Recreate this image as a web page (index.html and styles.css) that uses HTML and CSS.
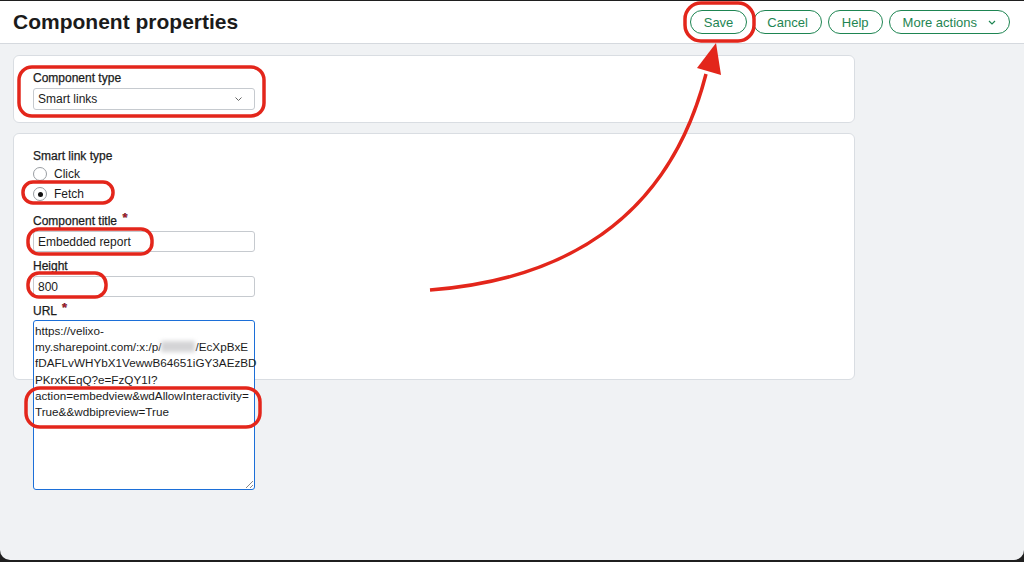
FILE: index.html
```html
<!DOCTYPE html>
<html lang="en">
<head>
  <meta charset="UTF-8" />
  <title>Component properties</title>
  <link rel="stylesheet" href="styles.css">
</head>
<body>

<div class="window">
  <header class="topbar">
    <h1>Component properties</h1>
    <div class="actions">
      <button class="btn">Save</button>
      <button class="btn">Cancel</button>
      <button class="btn">Help</button>
      <button class="btn more">More actions
        <svg width="8" height="5" viewBox="0 0 8 5"><path d="M1 1l3 3 3-3" fill="none" stroke="#1e8552" stroke-width="1.2"/></svg>
      </button>
    </div>
  </header>

  <main class="content">
    <section class="card card-type">
      <label class="field-label">Component type</label>
      <div class="select">
        <span>Smart links</span>
        <svg width="7" height="4" viewBox="0 0 7 4"><path d="M0.5 0.5l3 3 3-3" fill="none" stroke="#666" stroke-width="1"/></svg>
      </div>
    </section>

    <section class="card card-link">
      <label class="field-label">Smart link type</label>
      <div class="radio-row"><span class="radio"></span>Click</div>
      <div class="radio-row"><span class="radio checked"></span>Fetch</div>

      <label class="field-label spaced">Component title <span class="req">*</span></label>
      <div class="input">Embedded report</div>

      <label class="field-label spaced-sm">Height</label>
      <div class="input">800</div>

      <label class="field-label spaced-xs">URL <span class="req">*</span></label>
      <div class="textarea">
        <span class="line">https://velixo-</span>
        <span class="line">my.sharepoint.com/:x:/p/<span class="blur"></span>/EcXpBxE</span>
        <span class="line">fDAFLvWHYbX1VewwB64651iGY3AEzBD</span>
        <span class="line">PKrxKEqQ?e=FzQY1I?</span>
        <span class="line">action=embedview&amp;wdAllowInteractivity=</span>
        <span class="line">True&amp;&amp;wdbipreview=True</span>
      </div>
    </section>
  </main>

  <!-- screenshot annotations -->
  <svg class="marks" width="1024" height="561" viewBox="0 1 1024 561">
    <g fill="none" stroke="#e3261b" stroke-width="3.5">
      <rect x="19" y="67" width="245" height="49" rx="13"/>
      <rect x="23" y="182" width="90" height="21" rx="10"/>
      <rect x="28" y="229" width="124" height="25" rx="11"/>
      <rect x="28" y="273" width="78" height="24" rx="11"/>
      <rect x="26" y="388" width="234" height="39" rx="14"/>
      <rect x="685" y="3" width="69" height="38" rx="16"/>
      <path d="M430 290 C 560 280 668 222 706 74" stroke-width="3.5"/>
    </g>
    <polygon points="716,43 697,68 721,75" fill="#e3261b"/>
  </svg>
</div>

</body>
</html>
```

FILE: styles.css
```css
html, body {
  margin: 0;
  background: #1f1f1f;
}

body {
  font-family: 'Liberation Sans', Arial, sans-serif;
  color: #1d1d1f;
}

.window {
  position: relative;
  margin-top: 1px;
  height: 559px;
  background: #f0f2f4;
  border-radius: 0 0 10px 10px;
  overflow: hidden;
}

.topbar {
  height: 42px;
  background: #fff;
  border-bottom: 1px solid #d5d9de;
  display: flex;
  align-items: center;
  justify-content: space-between;
  padding: 0 14px 0 13px;
}

.topbar h1 {
  margin: 0;
  font-size: 21px;
  font-weight: bold;
  color: #1b1b1b;
}

.actions {
  display: flex;
  gap: 6px;
}

.btn {
  height: 24px;
  padding: 0 13px;
  border: 1.5px solid #1e8552;
  border-radius: 12px;
  background: #fff;
  color: #1e8552;
  font-family: inherit;
  font-size: 13px;
  display: flex;
  align-items: center;
  gap: 11px;
}

.content {
  padding: 11px 13px;
  display: flex;
  flex-direction: column;
  gap: 10px;
  width: 842px;
}

.card {
  background: #fff;
  border: 1px solid #d9dde2;
  border-radius: 6px;
  padding: 14px 19px;
}

.card-type {
  height: 39px;
  padding-top: 15px;
  padding-bottom: 12px;
}

.card-link {
  height: 216px;
  padding-top: 15px;
}

.field-label {
  display: block;
  font-size: 12px;
  line-height: 15px;
  font-weight: 500;
  color: #1b1b1b;
  -webkit-text-stroke: 0.25px #1b1b1b;
}

.field-label.spaced {
  margin-top: 9px;
}

.field-label.spaced-sm {
  margin-top: 7px;
}

.field-label.spaced-xs {
  margin-top: 6px;
}

.req {
  color: #c4122b;
  font-weight: bold;
  font-size: 13px;
  position: relative;
  top: -3px;
  margin-left: 2px;
}

.select, .input {
  width: 222px;
  height: 21px;
  margin-top: 2px;
  border: 1px solid #c6cacf;
  border-radius: 3px;
  font-size: 12px;
  color: #1b1b1b;
  display: flex;
  align-items: center;
  padding: 0 4px;
  box-sizing: border-box;
}

.select {
  justify-content: space-between;
  padding-right: 12px;
  height: 22px;
}

.radio-row {
  display: flex;
  align-items: center;
  gap: 7px;
  height: 20px;
  font-size: 12px;
  color: #1b1b1b;
}

.radio {
  width: 12px;
  height: 12px;
  border: 1px solid #9a9ea3;
  border-radius: 50%;
  background: #fff;
  display: flex;
  align-items: center;
  justify-content: center;
}

.radio.checked::after {
  content: "";
  width: 5px;
  height: 5px;
  border-radius: 50%;
  background: #111;
}

.textarea {
  position: relative;
  width: 222px;
  height: 170px;
  margin-top: 1px;
  box-sizing: border-box;
  border: 1.5px solid #1c6fd8;
  border-radius: 3px;
  background: #fff;
  padding: 2px 1px;
  font-size: 11.7px;
  line-height: 16.2px;
  color: #1b1b1b;
}

.textarea .line {
  display: block;
  white-space: nowrap;
}

.textarea::after {
  content: "";
  position: absolute;
  right: 1px;
  bottom: 1px;
  width: 7px;
  height: 7px;
  background: linear-gradient(135deg, transparent 48%, #888 48%, #888 56%, transparent 56%, transparent 72%, #888 72%, #888 80%, transparent 80%);
}

.blur {
  display: inline-block;
  width: 34px;
  height: 11px;
  vertical-align: -1px;
  background: #d4d4d6;
  filter: blur(2px);
}

.marks {
  position: absolute;
  left: 0;
  top: 0;
  pointer-events: none;
}
```
